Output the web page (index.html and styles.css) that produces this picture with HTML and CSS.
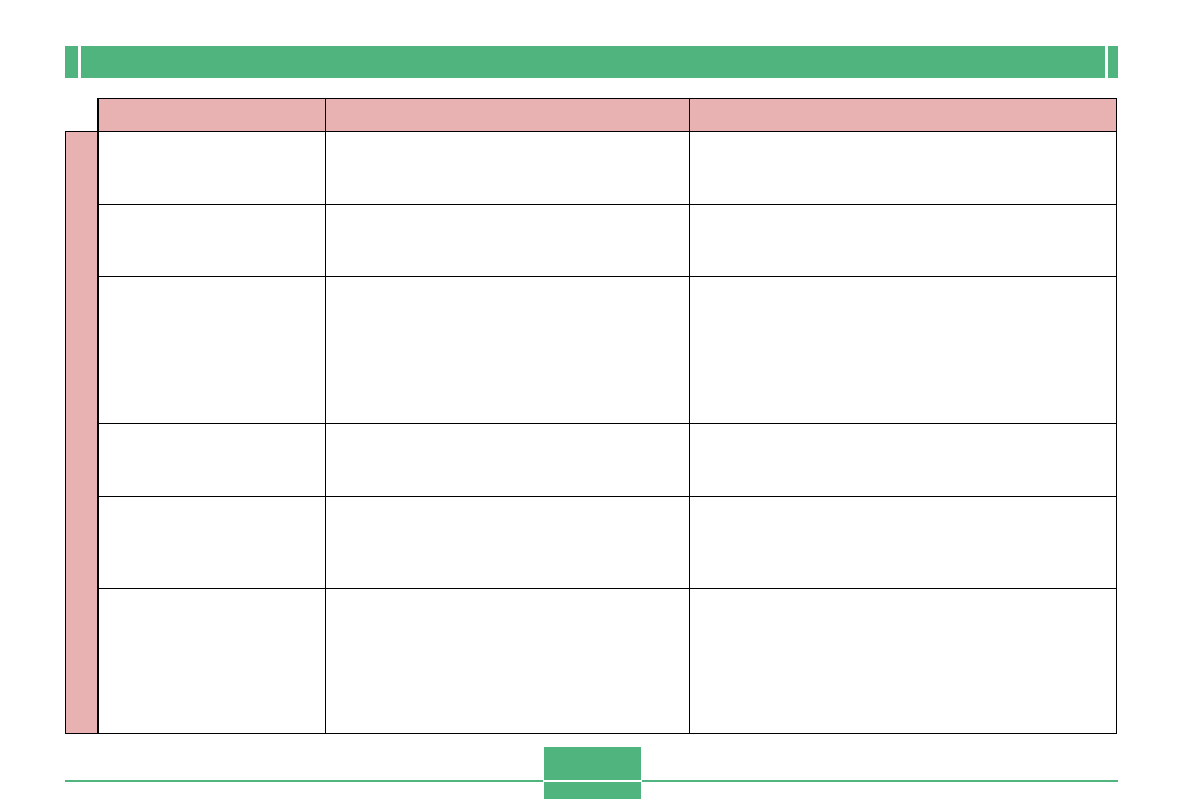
FILE: index.html
```html
<!DOCTYPE html>
<html lang="en">
<head>
    <meta charset="UTF-8">
    <meta name="viewport" content="width=device-width, initial-scale=1.0">
    <title>Page</title>
    <link rel="stylesheet" href="styles.css">
</head>
<body>
    <div class="page">
        <div class="topbar">
            <div class="tab left"></div>
            <div class="tab main"></div>
            <div class="tab right"></div>
        </div>

        <div class="sheet">
            <div class="side"></div>
            <div class="grid">
                <div class="cell head"></div>
                <div class="cell head"></div>
                <div class="cell head"></div>

                <div class="cell r1"></div>
                <div class="cell r1"></div>
                <div class="cell r1"></div>

                <div class="cell r2"></div>
                <div class="cell r2"></div>
                <div class="cell r2"></div>

                <div class="cell r3"></div>
                <div class="cell r3"></div>
                <div class="cell r3"></div>

                <div class="cell r4"></div>
                <div class="cell r4"></div>
                <div class="cell r4"></div>

                <div class="cell r5"></div>
                <div class="cell r5"></div>
                <div class="cell r5"></div>

                <div class="cell r6"></div>
                <div class="cell r6"></div>
                <div class="cell r6"></div>
            </div>
        </div>

        <div class="footer">
            <div class="rule first"></div>
            <div class="pagebox">
                <div class="upper"></div>
                <div class="lower"></div>
            </div>
            <div class="rule last"></div>
        </div>
    </div>
</body>
</html>
```

FILE: styles.css
```css
body {
    margin: 0;
    background: #ffffff;
    font-family: "Liberation Sans", Arial, sans-serif;
}
.page {
    width: 1053px;
    margin-left: 65px;
    padding-top: 46px;
}

/* green title bar */
.topbar {
    display: flex;
    gap: 3px;
    height: 32px;
}
.tab { background: #4fb47e; }
.tab.left { width: 13px; }
.tab.main { flex: 1; }
.tab.right { width: 10px; }

/* table */
.sheet {
    display: flex;
    margin-top: 20px;
}
.side {
    width: 31px;
    margin-top: 33px;
    background: #e8b2b2;
    border-left: 1px solid #000;
    border-top: 1px solid #000;
    border-bottom: 1px solid #000;
}
.grid {
    display: grid;
    grid-template-columns: 227px 364px 427px;
    grid-template-rows: 33px 73px 72px 147px 73px 92px 145px;
    border-left: 2px solid #000;
    border-top: 1px solid #000;
}
.cell {
    box-sizing: border-box;
    border-right: 1px solid #000;
    border-bottom: 1px solid #000;
}
.cell.head { background: #e8b2b2; }

/* footer */
.footer {
    display: flex;
    gap: 1px;
    margin-top: 13px;
    height: 52px;
}
.rule {
    height: 2px;
    margin-top: 33px;
    background: #4fb47e;
}
.rule.first { width: 478px; }
.rule.last { flex: 1; }
.pagebox {
    width: 97px;
    display: flex;
    flex-direction: column;
    gap: 2px;
}
.pagebox .upper { height: 33px; background: #4fb47e; }
.pagebox .lower { flex: 1; background: #4fb47e; }
```
